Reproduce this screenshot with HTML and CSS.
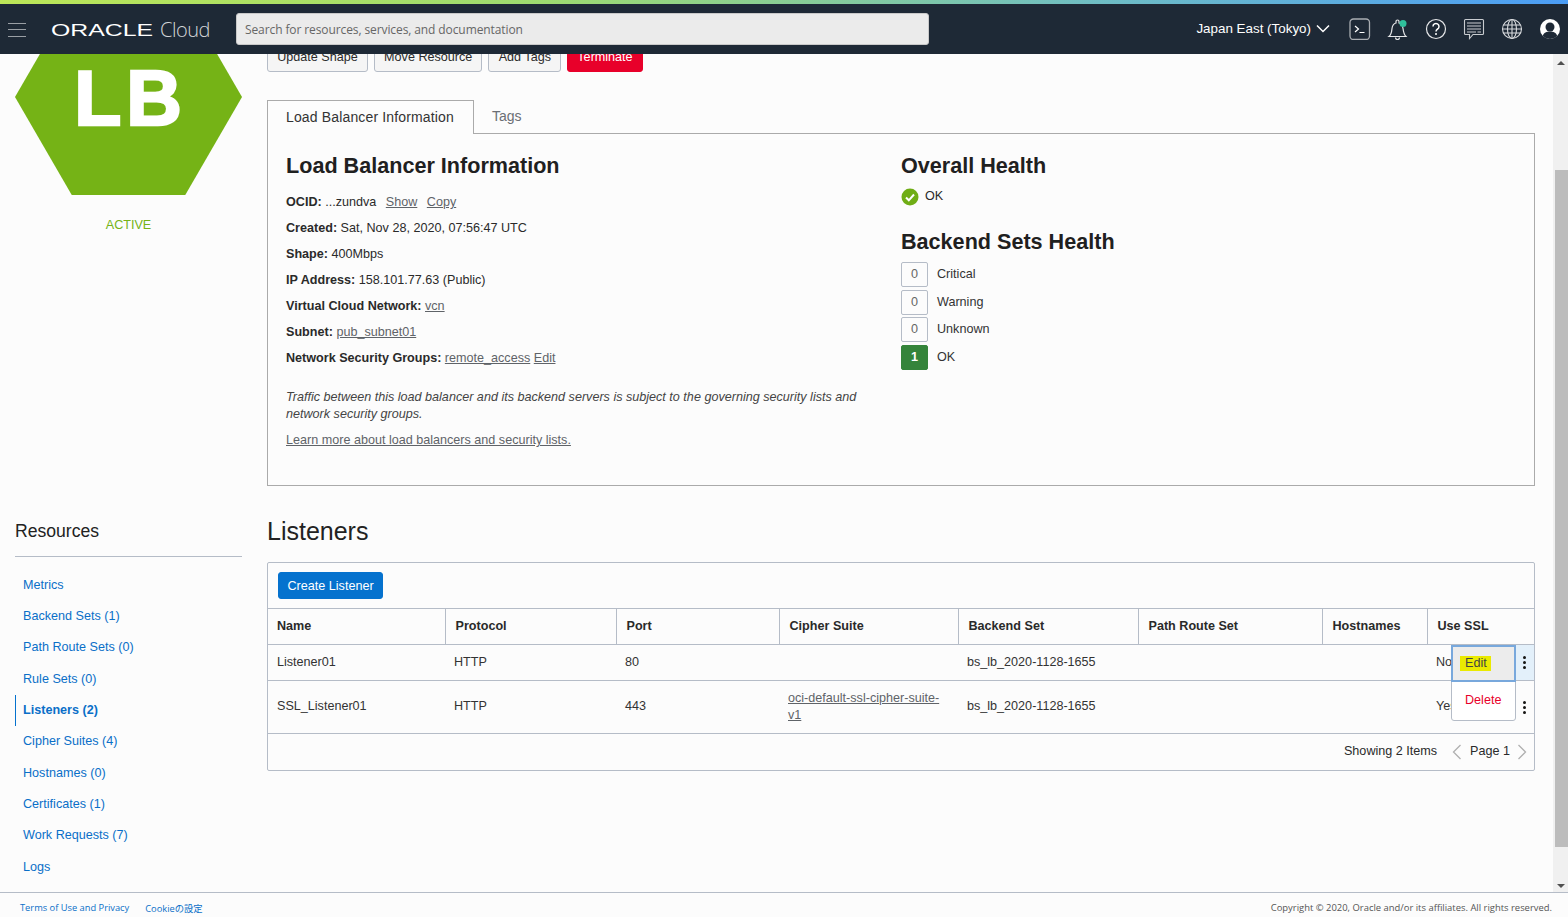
FILE: index.html
```html
<!DOCTYPE html>
<html lang="en">
<head>
<meta charset="utf-8">
<title>Load Balancer</title>
<link rel="stylesheet" href="styles.css">
</head>
<body>
<div class="strip"></div>
<header class="topbar">
  <button class="burger" aria-label="Menu"><span></span><span></span><span></span></button>
  <div class="logo">
    <svg class="logo-oracle" width="103" height="16" viewBox="0 0 103 16"><text x="0" y="13.5" textLength="102" lengthAdjust="spacingAndGlyphs" class="logo-text">ORACLE</text></svg>
    <span class="logo-cloud">Cloud</span>
  </div>
  <input class="search" type="text" placeholder="Search for resources, services, and documentation">
  <div class="top-right">
    <div class="region">Japan East (Tokyo)
      <svg width="14" height="9" viewBox="0 0 14 9"><path d="M1 1.500l6 6 6-6" fill="none" stroke="#fff" stroke-width="1.500"/></svg>
    </div>
    <div class="top-icons">
      <svg width="22" height="22" viewBox="0 0 22 22"><rect x="1" y="1" width="19.500" height="20.500" rx="3.500" fill="none" stroke="#a9adb2" stroke-width="1.300"/><path d="M6 8l3.500 3L6 14M10.500 14.500h5" fill="none" stroke="#fff" stroke-width="1.200"/></svg>
      <svg width="22" height="22" viewBox="0 0 22 22"><path d="M2 18.500c2.500-2 2.500-4 3-8 .4-3.200 2-5 4-5.500V3.500a1.500 1.500 0 0 1 3 0V5c2.500.6 3.600 2.500 4 5.500.5 4 1 6 3 8z" fill="none" stroke="#e6e7e9" stroke-width="1.200"/><path d="M8.500 19.500a2 2 0 0 0 4 0" fill="none" stroke="#e6e7e9" stroke-width="1.200"/><circle cx="16" cy="5.500" r="3.500" fill="#2fbf9b"/></svg>
      <svg width="22" height="22" viewBox="0 0 22 22"><circle cx="11" cy="11" r="9.500" fill="none" stroke="#e6e7e9" stroke-width="1.200"/><path d="M8 8.500a3 3 0 1 1 4.600 2.500c-1.100.7-1.600 1.200-1.600 2.500" fill="none" stroke="#fff" stroke-width="1.500"/><circle cx="11" cy="16" r="1" fill="#fff"/></svg>
      <svg width="22" height="22" viewBox="0 0 22 22"><path d="M2.500 1.500h17a1 1 0 0 1 1 1v13a1 1 0 0 1-1 1H10l-3.500 4v-4h-4a1 1 0 0 1-1-1v-13a1 1 0 0 1 1-1z" fill="none" stroke="#c9ccd0" stroke-width="1.100"/><path d="M4 5h14M4 8h14M4 11h14M4 14h9M14.500 14H18" stroke="#c9ccd0" stroke-width="1.100"/></svg>
      <svg width="22" height="22" viewBox="0 0 22 22"><g fill="none" stroke="#d8dadd" stroke-width="1.100"><circle cx="11" cy="11" r="9.500"/><ellipse cx="11" cy="11" rx="4.500" ry="9.500"/><path d="M11 1.500v19M2.500 7h17M2.500 15h17M1.500 11h19"/></g></svg>
      <svg width="22" height="22" viewBox="0 0 22 22"><circle cx="11" cy="11" r="10" fill="#fff"/><circle cx="11" cy="9" r="4.500" fill="#1e2936"/><path d="M3.800 18c1-3.500 3.800-4.500 7.200-4.500s6.200 1 7.200 4.500A10 10 0 0 1 11 21a10 10 0 0 1-7.200-3z" fill="#1e2936"/></svg>
    </div>
  </div>
</header>

<main class="viewport">
  <div class="page">
    <aside class="side">
      <div class="hex"><span class="hex-text">LB</span></div>
      <div class="state">ACTIVE</div>
      <h3 class="res-title">Resources</h3>
      <ul class="res-list">
        <li><a href="#">Metrics</a></li>
        <li><a href="#">Backend Sets (1)</a></li>
        <li><a href="#">Path Route Sets (0)</a></li>
        <li><a href="#">Rule Sets (0)</a></li>
        <li class="current"><a href="#">Listeners (2)</a></li>
        <li><a href="#">Cipher Suites (4)</a></li>
        <li><a href="#">Hostnames (0)</a></li>
        <li><a href="#">Certificates (1)</a></li>
        <li><a href="#">Work Requests (7)</a></li>
        <li><a href="#">Logs</a></li>
      </ul>
    </aside>

    <section class="content">
      <div class="actions">
        <button class="btn">Update Shape</button>
        <button class="btn">Move Resource</button>
        <button class="btn">Add Tags</button>
        <button class="btn danger">Terminate</button>
      </div>

      <div class="tabs">
        <div class="tab active">Load Balancer Information</div>
        <div class="tab">Tags</div>
      </div>

      <div class="info-panel">
        <div class="info-left">
          <h2>Load Balancer Information</h2>
          <div class="kv"><b>OCID:</b> ...zundva <a class="ml" href="#">Show</a> <a class="ml" href="#">Copy</a></div>
          <div class="kv"><b>Created:</b> Sat, Nov 28, 2020, 07:56:47 UTC</div>
          <div class="kv"><b>Shape:</b> 400Mbps</div>
          <div class="kv"><b>IP Address:</b> 158.101.77.63 (Public)</div>
          <div class="kv"><b>Virtual Cloud Network:</b> <a href="#">vcn</a></div>
          <div class="kv"><b>Subnet:</b> <a href="#">pub_subnet01</a></div>
          <div class="kv"><b>Network Security Groups:</b> <a href="#">remote_access</a> <a href="#">Edit</a></div>
          <p class="note">Traffic between this load balancer and its backend servers is subject to the governing security lists and network security groups.</p>
          <a class="learn" href="#">Learn more about load balancers and security lists.</a>
        </div>
        <div class="info-right">
          <h2>Overall Health</h2>
          <div class="overall">
            <svg width="18" height="18" viewBox="0 0 18 18"><circle cx="9" cy="9" r="8.500" fill="#6fad15"/><path d="M5 9.500l2.800 2.800L13 6.500" fill="none" stroke="#fff" stroke-width="2"/></svg>
            <span>OK</span>
          </div>
          <h2 class="second">Backend Sets Health</h2>
          <div class="health"><span class="count">0</span>Critical</div>
          <div class="health"><span class="count">0</span>Warning</div>
          <div class="health"><span class="count">0</span>Unknown</div>
          <div class="health"><span class="count ok">1</span>OK</div>
        </div>
      </div>

      <h1 class="section-title">Listeners</h1>

      <div class="list-panel">
        <div class="toolbar"><button class="btn primary">Create Listener</button></div>
        <table class="grid">
          <colgroup>
            <col class="c1"><col class="c2"><col class="c3"><col class="c4"><col class="c5"><col class="c6"><col class="c7"><col class="c8">
          </colgroup>
          <thead>
            <tr><th>Name</th><th>Protocol</th><th>Port</th><th>Cipher Suite</th><th>Backend Set</th><th>Path Route Set</th><th>Hostnames</th><th>Use SSL</th></tr>
          </thead>
          <tbody>
            <tr class="r1">
              <td>Listener01</td><td>HTTP</td><td>80</td><td></td><td>bs_lb_2020-1128-1655</td><td></td><td></td>
              <td class="last">No<span class="kebab on"><i></i><i></i><i></i></span></td>
            </tr>
            <tr class="r2">
              <td>SSL_Listener01</td><td>HTTP</td><td>443</td><td class="wrap"><a href="#">oci-default-ssl-cipher-suite-v1</a></td><td>bs_lb_2020-1128-1655</td><td></td><td></td>
              <td class="last">Yes<span class="kebab"><i></i><i></i><i></i></span></td>
            </tr>
          </tbody>
        </table>
        <div class="pager">
          <span class="showing">Showing 2 Items</span>
          <svg width="10" height="16" viewBox="0 0 10 16"><path d="M8.500 1L1.500 8l7 7" fill="none" stroke="#b0b0b0" stroke-width="1.300"/></svg>
          <span class="pageno">Page 1</span>
          <svg width="10" height="16" viewBox="0 0 10 16"><path d="M1.500 1l7 7-7 7" fill="none" stroke="#b0b0b0" stroke-width="1.300"/></svg>
        </div>
        <div class="menu">
          <div class="menu-item focus"><span class="hl">Edit</span></div>
          <div class="menu-item del">Delete</div>
        </div>
      </div>
    </section>
  </div>
  <div class="scroll">
    <span class="arrow up"></span>
    <span class="thumb"></span>
    <span class="arrow down"></span>
  </div>
</main>

<footer class="foot">
  <div class="foot-links"><a href="#">Terms of Use and Privacy</a><a href="#">Cookieの設定</a></div>
  <div class="copy">Copyright © 2020, Oracle and/or its affiliates. All rights reserved.</div>
</footer>
</body>
</html>
```
FILE: styles.css
```css
* { box-sizing: border-box; }
html, body { margin: 0; height: 917px; overflow: hidden; }
body {
  display: flex;
  flex-direction: column;
  background: #fcfcfc;
  color: #2a2a2a;
  font: 12.6px/1.2 "Liberation Sans", Arial, sans-serif;
}
a { color: #5f6368; }

.strip { height: 4px; flex: none; background: linear-gradient(90deg, #bce658 0%, #9edb70 35%, #6fbdc4 70%, #4b9df6 100%); }

.topbar {
  height: 50px;
  flex: none;
  display: flex;
  align-items: center;
  background: #1e2936;
  position: relative;
  z-index: 3;
}
.burger {
  width: 18px; height: 14px; margin: 1px 0 0 8px; padding: 0; border: 0; background: none;
  display: flex; flex-direction: column; justify-content: space-between;
}
.burger span { display: block; height: 1px; background: #9a9fa5; }
.logo { display: flex; align-items: center; margin-left: 25px; width: 185px; }
.logo-oracle { display: block; flex: none; margin-top: 1px; }
.logo-text { font: 400 16.5px "Liberation Sans", sans-serif; fill: #fff; }
.logo-cloud { margin-left: 6px; font: 300 20px "Open Sans", sans-serif; color: #d3d6d9; letter-spacing: -.5px; }
.search {
  width: 693px; height: 32px; padding: 0 8px;
  border: 1px solid #c9c9c9; border-radius: 3px; background: #ebebeb;
  font: 12px "Open Sans", sans-serif; letter-spacing: -.1px;
}
.search::placeholder { color: #666; opacity: 1; }
.top-right { margin-left: auto; display: flex; align-items: center; padding-right: 7px; }
.region { display: flex; align-items: center; gap: 5px; color: #fff; font-size: 13.4px; }
.top-icons { display: flex; align-items: center; gap: 16px; margin-left: 19px; }
.top-icons svg { display: block; }

.viewport { flex: 1; position: relative; overflow: hidden; }
.page { display: flex; margin-top: -55px; padding-left: 15px; }

.side { width: 227px; flex: none; }
.hex {
  width: 227px; height: 196px; background: #75b316;
  clip-path: polygon(0 50%, 25% 0, 75% 0, 100% 50%, 75% 100%, 25% 100%);
  display: flex; align-items: center; justify-content: center;
}
.hex-text { margin: 2px 0 0 4px; color: #fff; font: 700 77px/1 "Liberation Sans", sans-serif; letter-spacing: 5px; -webkit-text-stroke: 2.5px #fff; }
.state { margin-top: 22.5px; text-align: center; color: #75b316; }
.res-title { margin: 286.5px 0 0; padding-bottom: 13px; border-bottom: 1px solid #b5bcc7; font-size: 17.6px; font-weight: 400; line-height: 24px; color: #222; }
.res-list { list-style: none; margin: 12.5px 0 0; padding: 0; }
.res-list li { height: 31.33px; display: flex; align-items: center; padding-left: 7px; border-left: 1px solid transparent; }
.res-list a { color: #0a6fc8; text-decoration: none; }
.res-list .current { border-left-color: #0572ce; }
.res-list .current a { font-weight: 700; }

.content { width: 1268px; margin-left: 25px; padding-top: 43px; }
.actions { display: flex; gap: 6px; height: 30px; }
.btn {
  height: 30px; padding: 0 9.2px; border: 1px solid #b5bcc7; border-radius: 3px;
  background: #f5f5f5; color: #2a2a2a; font: 12.6px "Liberation Sans", sans-serif;
}
.btn.danger { background: #e8002a; border-color: #e8002a; color: #fff; }
.btn.primary { height: 27px; padding: 0 8.5px; background: #0572ce; border-color: #0572ce; color: #fff; }

.tabs { display: flex; margin-top: 28px; height: 34px; border-bottom: 1px solid #aaa; }
.tab { padding: 0 18px; line-height: 33px; color: #6b6f75; font-size: 14px; }
.tab.active { width: 207px; height: 34px; border: 1px solid #aaa; border-bottom: 0; background: #fcfcfc; color: #333; letter-spacing: .15px; }
.info-panel {
  height: 352px; display: flex;
  border: 1px solid #aaa; border-top: 0; padding: 18px 18px 0;
}
.info-left { width: 615px; flex: none; }
h2 { margin: 0; font-size: 21.6px; line-height: 27px; font-weight: 700; color: #1f2020; }
.kv { height: 26px; line-height: 26px; }
.info-left h2 + .kv { margin-top: 10px; }
.kv b { color: #2a2a2a; }
.ml { margin-left: 6px; }
.note { width: 580px; margin: 18px 0 0; font-style: italic; line-height: 17px; color: #444; }
.learn { display: block; margin-top: 10px; }
.overall { display: flex; align-items: center; gap: 6px; height: 18px; margin-top: 9px; }
.second { margin-top: 22px; }
.health { display: flex; align-items: center; height: 25px; margin-bottom: 2.6px; color: #333; }
.second + .health { margin-top: 7px; }
.count {
  width: 27px; height: 25px; margin-right: 9px;
  display: flex; align-items: center; justify-content: center;
  border: 1px solid #b5bcc7; border-radius: 2px; color: #666;
}
.count.ok { background: #34843a; border-color: #34843a; color: #fff; font-weight: 700; }

.section-title { margin: 30px 0 0; font-size: 25px; font-weight: 400; line-height: 30px; color: #222; }
.list-panel { position: relative; height: 209px; margin-top: 16px; border: 1px solid #b5bcc7; border-radius: 2px; }
.toolbar { height: 45px; padding: 9px 10px 0; }
.grid { width: 1266px; table-layout: fixed; border-collapse: collapse; }
.c1 { width: 177px; } .c2 { width: 171px; } .c3 { width: 163px; } .c4 { width: 179px; }
.c5 { width: 180px; } .c6 { width: 184px; } .c7 { width: 105px; } .c8 { width: 107px; }
.grid th {
  height: 36px; padding: 0 9px 0 10px; text-align: left; font-weight: 700;
  border-top: 1px solid #b5bcc7; border-bottom: 1px solid #b5bcc7; border-right: 1px solid #b5bcc7; color: #2a2a2a;
}
.grid th:first-child { padding-left: 9px; }
.grid th:last-child { border-right: 0; }
.grid td { padding: 0 9px; border-bottom: 1px solid #b5bcc7; line-height: 17px; color: #333; }
.grid .wrap { padding-right: 18px; }
.r1 td { height: 36px; }
.r2 td { height: 53px; padding-bottom: 2px; }
.r2 .wrap { padding-bottom: 0; }
.grid .last { position: relative; overflow: hidden; padding-left: 9px; }
.kebab {
  position: absolute; right: 0; top: 0; bottom: 0; width: 19px;
  display: flex; flex-direction: column; align-items: center; justify-content: center; gap: 2px;
}
.kebab.on { background: #e3f0fa; }
.kebab i { width: 3px; height: 3px; border-radius: 50%; background: #161513; }
.pager { height: 36px; display: flex; align-items: center; justify-content: flex-end; padding-right: 7px; }
.showing { margin-right: 15px; }
.pageno { margin: 0 7px 0 8px; }
.menu {
  position: absolute; left: 1183px; top: 82px; width: 65px; height: 76px;
  background: #fff; border: 1px solid #b5bcc7; border-radius: 0 0 3px 3px; z-index: 2;
}
.menu-item { display: flex; align-items: center; }
.menu-item.focus { height: 37px; margin: -1px -1px 0; padding-left: 7px; background: #ececec; border: 2px solid #78a8dc; }
.menu-item.del { height: 37px; color: #e8002a; padding-left: 13px; }
.hl { background: #eaea00; padding: 0 4px 0 5px; color: #444; }

.scroll {
  position: absolute; top: 0; right: 0; bottom: 0; width: 15px;
  background: #f0f0f0;
}
.thumb { position: absolute; top: 116px; right: 0; width: 13px; height: 677px; background: #bcbcbc; }
.arrow { position: absolute; left: 4px; width: 0; height: 0; border-left: 4px solid transparent; border-right: 4px solid transparent; }
.arrow.up { top: 7px; border-bottom: 4px solid #505050; }
.arrow.down { bottom: 4px; border-top: 4px solid #505050; }

.foot {
  height: 25px; flex: none; display: flex; align-items: center; justify-content: space-between;
  padding: 5px 16px 0 20px; border-top: 1px solid #b5bcc7; background: #fcfcfc;
  font: 9.3px "Open Sans", "Noto Sans CJK JP", sans-serif;
}
.foot-links { display: flex; gap: 16px; }
.foot-links a { color: #0a6fc8; text-decoration: none; }
.copy { color: #555; font-size: 9.43px; }
```
